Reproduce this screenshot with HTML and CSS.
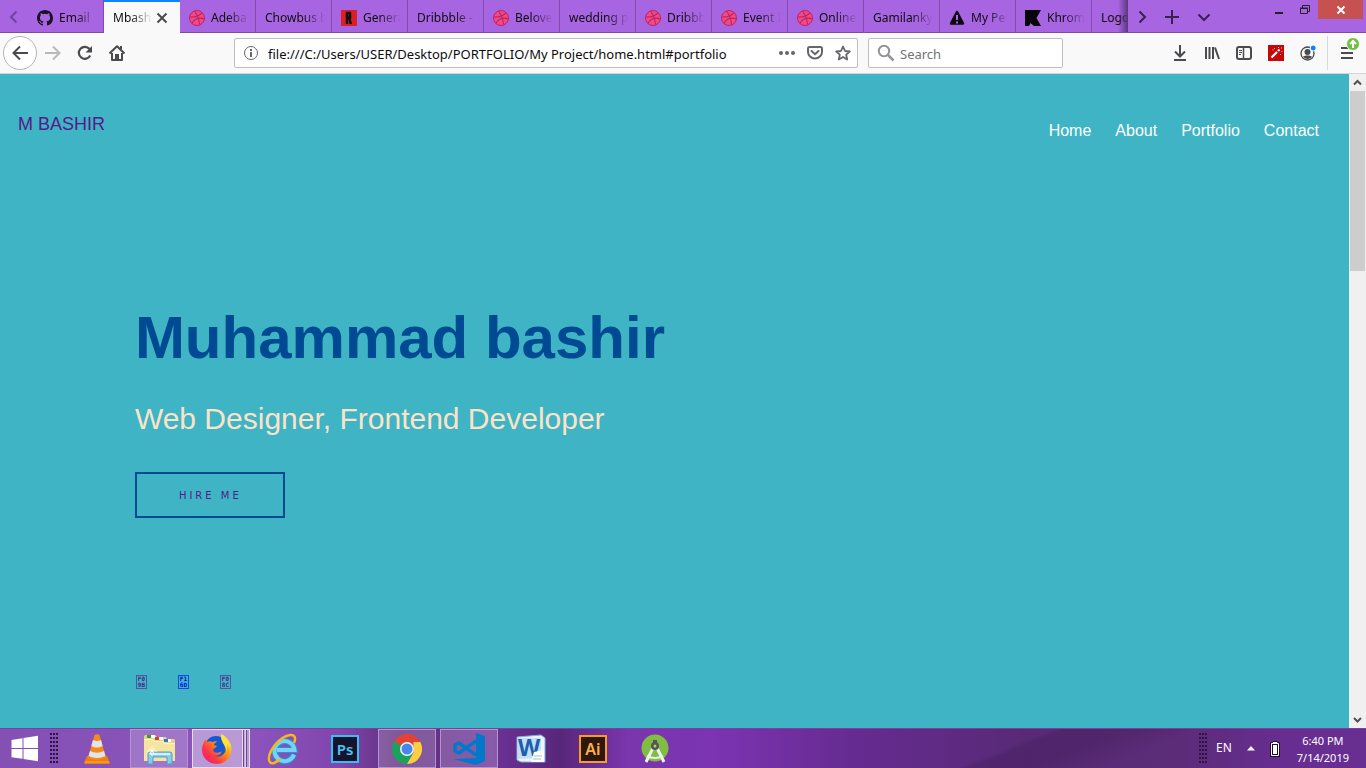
FILE: index.html
```html
<!DOCTYPE html>
<html lang="en">
<head>
<meta charset="utf-8">
<title>Mbashir</title>
<link rel="stylesheet" href="styles.css">
</head>
<body>
<svg class="defs" aria-hidden="true">
  <symbol id="dribbble" viewBox="0 0 16 16">
    <circle cx="8" cy="8" r="7.5" fill="#ea4c89" stroke="#c32361"/>
    <g fill="none" stroke="#c32361" stroke-width="1.2">
      <path d="M5.5 1c2.500 3.200 4.300 7.500 5.200 13.500"/>
      <path d="M.8 7C6 7.200 10.500 6 13 2.600"/>
      <path d="M3 13.400C5.200 9 10 7.300 15.300 8.800"/>
    </g>
  </symbol>
</svg>

<header class="browser">
  <div class="tabstrip">
    <button class="strip-btn faded" aria-label="Scroll tabs left"><svg width="16" height="16" viewBox="0 0 16 16"><path d="M10.500 2.500 5 8l5.500 5.500" fill="none" stroke="#221133" stroke-width="2"/></svg></button>
    <div class="tabs" role="tablist">
      <button class="tab" role="tab"><svg class="fav" viewBox="0 0 16 16"><path fill="#1b1224" d="M8 0C3.580 0 0 3.580 0 8c0 3.540 2.290 6.530 5.470 7.590.4.070.55-.17.55-.38v-1.490c-2.010.37-2.530-.49-2.690-.94-.09-.23-.48-.94-.82-1.130-.28-.15-.68-.52-.01-.53.63-.01 1.080.58 1.230.82.72 1.210 1.870.87 2.330.66.07-.52.28-.87.51-1.070-1.780-.2-3.640-.89-3.640-3.950 0-.87.31-1.590.82-2.150-.08-.2-.36-1.020.08-2.120 0 0 .67-.21 2.200.82a7.600 7.600 0 0 1 4 0c1.530-1.040 2.200-.82 2.200-.82.44 1.100.16 1.920.08 2.120.51.56.82 1.270.82 2.150 0 3.070-1.870 3.750-3.650 3.950.29.25.54.73.54 1.480v2.200c0 .21.15.46.55.38A8.010 8.010 0 0 0 16 8c0-4.420-3.580-8-8-8z"/></svg><span>Email</span></button>
      <button class="tab active" role="tab" aria-selected="true"><span>Mbashi</span><svg class="close" viewBox="0 0 12 12"><path d="M1.500 1.500l9 9m0-9l-9 9" stroke="#4a4a4f" stroke-width="2"/></svg></button>
      <button class="tab" role="tab"><svg class="fav"><use href="#dribbble"/></svg><span>Adeba</span></button>
      <button class="tab" role="tab"><span>Chowbus b</span></button>
      <button class="tab" role="tab"><svg class="fav" viewBox="0 0 16 16"><path fill="#dc1f26" d="M0 0h16v16H0z"/><path fill="none" stroke="#111" stroke-width="2.500" d="M6 14V3h3v4.500H6M8.300 8l1.500 6"/></svg><span>Genera</span></button>
      <button class="tab" role="tab"><span>Dribbble -</span></button>
      <button class="tab" role="tab"><svg class="fav"><use href="#dribbble"/></svg><span>Belove</span></button>
      <button class="tab" role="tab"><span>wedding p</span></button>
      <button class="tab" role="tab"><svg class="fav"><use href="#dribbble"/></svg><span>Dribbb</span></button>
      <button class="tab" role="tab"><svg class="fav"><use href="#dribbble"/></svg><span>Event I</span></button>
      <button class="tab" role="tab"><svg class="fav"><use href="#dribbble"/></svg><span>Online</span></button>
      <button class="tab" role="tab"><span>Gamilanky</span></button>
      <button class="tab" role="tab"><svg class="fav" viewBox="0 0 16 16"><path d="M8 2 14 13.500H2z" stroke="#0b0610" stroke-width="2.500" stroke-linejoin="round" fill="#0b0610"/><path d="M8 5v5M8 11.500v2" stroke="#a865e2" stroke-width="2"/></svg><span>My Pe</span></button>
      <button class="tab" role="tab"><svg class="fav" viewBox="0 0 16 16"><path d="M0 0h16l-4.500 8 4.500 8H9L5.500 13 4 16H0z" fill="#08040c"/></svg><span>Khrom</span></button>
      <button class="tab last" role="tab"><span>Logo</span></button>
    </div>
    <button class="strip-btn" aria-label="Scroll tabs right"><svg width="16" height="16" viewBox="0 0 16 16"><path d="m5.500 2.500 5.500 5.500-5.500 5.500" fill="none" stroke="#3a2050" stroke-width="2"/></svg></button>
    <button class="strip-btn wide" aria-label="New tab"><svg width="16" height="16" viewBox="0 0 16 16"><path d="M8 1v14M1 8h14" stroke="#3a2050" stroke-width="2"/></svg></button>
    <button class="strip-btn wide" aria-label="List all tabs"><svg width="16" height="16" viewBox="0 0 16 16"><path d="m2.500 5.500 5.500 5.500 5.500-5.500" fill="none" stroke="#3a2050" stroke-width="2"/></svg></button>
    <div class="window-controls">
      <button class="win" aria-label="Minimize"><svg width="12" height="12" viewBox="0 0 12 12"><path d="M2 9h8" stroke="#222" stroke-width="2"/></svg></button>
      <button class="win" aria-label="Restore"><svg width="12" height="12" viewBox="0 0 12 12"><path d="M1.500 4.500h7v5h-7zM3.500 4V1.500h7v6H9M1 4h8" fill="none" stroke="#222"/></svg></button>
      <button class="win win-close" aria-label="Close"><svg width="10" height="10" viewBox="0 0 10 10"><path d="m1.500 1.500 7 7m0-7-7 7" stroke="#fff" stroke-width="2"/></svg></button>
    </div>
  </div>

  <div class="toolbar">
    <button class="tool back" aria-label="Back"><svg width="16" height="16" viewBox="0 0 16 16"><path d="M16 8H1.500M8 1.500 1.500 8 8 14.500" fill="none" stroke="#4a4a4f" stroke-width="2"/></svg></button>
    <button class="tool" aria-label="Forward"><svg width="16" height="16" viewBox="0 0 16 16"><path d="M0 8h14.500M8 1.500 14.500 8 8 14.500" fill="none" stroke="#b9b9bb" stroke-width="2"/></svg></button>
    <button class="tool" aria-label="Reload"><svg width="16" height="16" viewBox="0 0 16 16"><path d="M13.200 10.500A6 6 0 1 1 12.500 4" fill="none" stroke="#4a4a4f" stroke-width="2.200"/><path d="M15 1v6.500H8.500z" fill="#4a4a4f"/></svg></button>
    <button class="tool" aria-label="Home"><svg width="16" height="16" viewBox="0 0 16 16"><path d="M.5 8.500 8 1.200l7.500 7.300M3 8v7h10V8" fill="none" stroke="#4a4a4f" stroke-width="2" stroke-linejoin="round"/><path d="M6 15V9h4v6z" fill="#4a4a4f"/><path d="M11 1h2v3h-2z" fill="#4a4a4f"/></svg></button>
    <div class="spring"></div>
    <div class="field url">
      <svg width="16" height="16" viewBox="0 0 16 16"><circle cx="8" cy="8" r="6.500" fill="none" stroke="#66666a"/><path d="M8 7v5M8 4v2" stroke="#66666a" stroke-width="2"/></svg>
      <input type="text" aria-label="Address" value="file:///C:/Users/USER/Desktop/PORTFOLIO/My Project/home.html#portfolio">
      <button class="mini" aria-label="Page actions"><svg width="16" height="16" viewBox="0 0 16 16" fill="#66666a"><circle cx="2" cy="8" r="2"/><circle cx="8" cy="8" r="2"/><circle cx="14" cy="8" r="2"/></svg></button>
      <button class="mini" aria-label="Save to Pocket"><svg width="16" height="16" viewBox="0 0 16 16" fill="none" stroke="#66666a" stroke-width="2"><path d="M2.500 2h11a1.500 1.500 0 0 1 1.500 1.500V7A7 6.500 0 0 1 1 7V3.500A1.500 1.500 0 0 1 2.500 2z"/><path d="M4.500 6 8 9.200 11.500 6" stroke-linecap="round"/></svg></button>
      <button class="mini" aria-label="Bookmark"><svg width="16" height="16" viewBox="0 0 16 16"><path d="m8 1.500 2 4.500 4.800.5-3.600 3.200 1 4.800L8 12l-4.200 2.500 1-4.800L1.200 6.500 6 6z" fill="none" stroke="#66666a" stroke-width="1.800" stroke-linejoin="round"/></svg></button>
    </div>
    <div class="field search">
      <svg width="18" height="18" viewBox="0 0 18 18"><circle cx="7" cy="7" r="5.200" fill="none" stroke="#939397" stroke-width="2"/><path d="m11 11 5.500 5.500" stroke="#939397" stroke-width="2.500"/></svg>
      <input type="search" aria-label="Search" placeholder="Search">
    </div>
    <div class="spring"></div>
    <button class="tool" aria-label="Downloads"><svg width="16" height="16" viewBox="0 0 16 16"><path d="M8 0v11M3 6.500 8 11.500l5-5M2 15h12" fill="none" stroke="#4a4a4f" stroke-width="2"/></svg></button>
    <button class="tool" aria-label="Library"><svg width="16" height="16" viewBox="0 0 16 16"><path d="M2 2v12M5.500 2v12M9 2v12M11 2.500l4 11.500" fill="none" stroke="#4a4a4f" stroke-width="2"/></svg></button>
    <button class="tool" aria-label="Sidebar"><svg width="16" height="16" viewBox="0 0 16 16" fill="none" stroke="#4a4a4f"><rect x="1" y="2" width="14" height="12" rx="2" stroke-width="2"/><path d="M7.500 2v12" stroke-width="1.500"/><path d="M3 5.500h3M3 7.500h3M3 9.500h2"/></svg></button>
    <button class="tool" aria-label="Highlighter"><svg width="16" height="16" viewBox="0 0 16 16"><path d="M0 0h16v16H0z" fill="#c70808"/><path d="m3.500 12.500 5.500-5.500" stroke="#fff" stroke-width="2.200"/><path d="m10 6 1.500-1.500" stroke="#fff" stroke-width="2.200"/><path d="M6 3.500h1M4.500 5h1M12 9.500h1M10 2.500h1M13.500 6.500h1M13 3h1" stroke="#ffb7b7"/></svg></button>
    <button class="tool" aria-label="Account"><svg width="16" height="16" viewBox="0 0 16 16"><circle cx="7.500" cy="8.500" r="6.500" fill="none" stroke="#4a4a4f" stroke-width="1.300"/><circle cx="7.500" cy="7" r="3" fill="#4a4a4f"/><path d="M3 12c1-2 8-2 9 0-2.500 2.500-6.500 2.500-9 0z" fill="#4a4a4f"/><circle cx="13.200" cy="3" r="3" fill="#0a84ff" stroke="#f9f9fa"/></svg></button>
    <button class="tool menu" aria-label="Menu"><svg width="20" height="24" viewBox="0 0 20 24"><path d="M1 10h12M1 15h12M1 20h12" stroke="#4a4a4f" stroke-width="2"/><circle cx="13" cy="6" r="6.500" fill="#74bd43" stroke="#f9f9fa"/><path d="M13 10V3.500M10 6l3-3 3 3" fill="none" stroke="#fff" stroke-width="2"/></svg></button>
  </div>
</header>

<div class="viewport">
  <main class="page">
    <div class="page-head">
      <a class="logo" href="#home">M BASHIR</a>
      <nav class="page-nav">
        <a href="#home">Home</a>
        <a href="#about">About</a>
        <a href="#portfolio">Portfolio</a>
        <a href="#contact">Contact</a>
      </nav>
    </div>
    <section class="hero">
      <h1>Muhammad bashir</h1>
      <p>Web Designer, Frontend Developer</p>
      <a class="hire" href="#contact">HIRE ME</a>
      <div class="social">
        <a href="#github" aria-label="GitHub">F0<br>9B</a>
        <a class="unvisited" href="#instagram" aria-label="Instagram">F1<br>6D</a>
        <a href="#linkedin" aria-label="LinkedIn">F0<br>8C</a>
      </div>
    </section>
  </main>
  <div class="scrollbar" aria-hidden="true">
    <svg class="arrow" viewBox="0 0 17 17"><path d="M5 10.500 8.500 7l3.500 3.500" fill="none" stroke="#505050" stroke-width="2"/></svg>
    <div class="track"><div class="thumb"></div></div>
    <svg class="arrow" viewBox="0 0 17 17"><path d="M5 7l3.500 3.500L12 7" fill="none" stroke="#505050" stroke-width="2"/></svg>
  </div>
</div>

<footer class="taskbar">
  <button class="start" aria-label="Start"><svg width="28" height="28" viewBox="0 0 28 28" fill="#fff"><path d="M.5 5 11.500 3.200V13H.5zM12.500 3 27 .8V13H12.500zM.5 14h11v9.800L.5 22.200zM12.500 14H27v12.200L12.500 24z"/></svg></button>
  <div class="grip"></div>
  <div class="apps">
    <button class="app" aria-label="VLC"><svg width="32" height="32" viewBox="0 0 32 32"><path d="M6 23h20l3 7q0 1-1 1H4q-1 0-1-1z" fill="#ef7d0c"/><path d="M4 29h24" stroke="#ffb04a" stroke-width="1"/><path d="M13.500 2q2.500-1.500 5 0L25 25q-9 4-18 0z" fill="#f58a1c"/><path d="M12 7q4 2 8 0l1.700 6q-5.700 3-11.400 0zM9 18q7 3.500 14 0l1.500 5q-8.500 4-17 0z" fill="#e4e4e8"/></svg></button>
    <button class="app open" aria-label="File Explorer"><svg width="34" height="32" viewBox="0 0 34 32"><path d="M2 4q0-2 2-2h9l2 2h9l1 2h7q1 0 1 2v16H2z" fill="#e8d283"/><path d="M5 2h8v3H5z" fill="#fff"/><path d="M5 2h4v3H5z" fill="#2aa336"/><path d="M13 4h8v3h-8z" fill="#fff"/><path d="M13 4h4v3h-4z" fill="#db4125"/><path d="M22 6h7v3h-7z" fill="#fff"/><path d="M22 6h4v3h-4z" fill="#2c78d2"/><path d="M2 6h9l2 2h8l2 2h10v18H2z" fill="#f5e5a0"/><path d="M2 6.500h9l2 2h8l2 2h10" fill="none" stroke="#fff6cc"/><path d="M6 31V21q0-2 2-2h20q2 0 2 2v10h-5v-7H11v7z" fill="#8ccbe9" stroke="#4d9fc9"/><path d="M8 21h20" stroke="#d4f1fd" stroke-width="2"/><path d="M10 13v10M5 18h10M7 15l6 6M13 15l-6 6" stroke="#fff" stroke-width=".8"/></svg></button>
    <button class="app stacked" aria-label="Firefox"><svg width="32" height="32" viewBox="0 0 32 32"><defs><linearGradient id="fx" x1="1" y1="0" x2="0" y2="1"><stop offset=".1" stop-color="#fff44f"/><stop offset=".4" stop-color="#ff980e"/><stop offset=".7" stop-color="#ff3647"/><stop offset="1" stop-color="#e31587"/></linearGradient></defs><circle cx="15" cy="14" r="11" fill="#1558cf"/><path d="M20 1c6 3 11 9 10.500 16C30 25 23.500 31 16 31 8 31 1 25 1 17c0-5 2-9 4-11l1 3c2-1 4-1 5 0l5-1c-1 2-3 2-3 4l3 1c-1 2-3 2-4 4 1 4 7 3 9 1-2 6-8 5-9 4 5 4 13 0 13-7 0-6-5-8-5-15z" fill="url(#fx)"/><path d="M20 1c7 4 9 9 9 14l-3-4c0 3 0 5-1 7 0-6-6-9-5-17z" fill="#ffe23a"/></svg></button>
    <button class="app" aria-label="Internet Explorer"><svg width="32" height="32" viewBox="0 0 32 32"><path d="M27 21.500A10 10 0 1 1 27.500 17H10" fill="none" stroke="#2f8fd6" stroke-width="6"/><path d="M27 21.500A10 10 0 1 1 27.500 17H10" fill="none" stroke="#74d3f7" stroke-width="4"/><path d="M27 10C32-2 18 0 8 12 0 22 0 32 7 30q3-1 6-4" fill="none" stroke="#f4b81d" stroke-width="2.500"/></svg></button>
    <button class="app" aria-label="Photoshop"><svg width="28" height="28" viewBox="0 0 28 28"><path d="M1 1h26v26H1z" fill="#14142c" stroke="#35bdf5" stroke-width="2"/><text x="14" y="20" text-anchor="middle" class="badge-text ps">Ps</text></svg></button>
    <button class="app open" aria-label="Chrome"><svg width="30" height="30" viewBox="0 0 30 30"><path d="M15 15 2 7.500A15 15 0 0 1 28 7.500z" fill="#e14335"/><path d="M2 7.500A15 15 0 0 0 15 30l6.500-11.300L15 15z" fill="#1da15f"/><path d="M28 7.500A15 15 0 0 1 15 30l6.500-11.200V7.500z" fill="#ffcd42"/><path d="M15 8h13.200A15 15 0 0 0 28 7.500L15 0z" fill="#e14335"/><circle cx="15" cy="15" r="7" fill="#f4f4f4"/><circle cx="15" cy="15" r="5.500" fill="#4587ee"/></svg></button>
    <button class="app open" aria-label="Visual Studio Code"><svg width="34" height="34" viewBox="0 0 34 34"><path d="M24 1 33 4v25l-9 4L1 27l23-1z" fill="#0179cb"/><path d="M24 9 7 21 3 19V13l4-2 17 12" fill="none" stroke="#0179cb" stroke-width="3.500"/></svg></button>
    <button class="app" aria-label="Word"><svg width="30" height="30" viewBox="0 0 30 30"><path d="M1 3 25 1l4 3v24H5l-4-2z" fill="#edf5fc" stroke="#7eaed9"/><path d="M2 4h23v20l-23 1z" fill="#c5def3"/><text x="13" y="22" text-anchor="middle" class="badge-text word">W</text><path d="m18 18 10-2v12H15z" fill="#fff"/><path d="M18 22h8M17 25h8" stroke="#9fc1df"/></svg></button>
    <button class="app" aria-label="Illustrator"><svg width="28" height="28" viewBox="0 0 28 28"><path d="M1 1h26v26H1z" fill="#2e180c" stroke="#fa9c1c" stroke-width="2"/><text x="14" y="20" text-anchor="middle" class="badge-text ai">Ai</text></svg></button>
    <button class="app" aria-label="Android Studio"><svg width="28" height="30" viewBox="0 0 28 30"><circle cx="14" cy="14" r="13.500" fill="#7fbd43"/><path d="M12 6h4v6h-4z" fill="#555"/><path d="M12 14 5 28M16 14l7 14" stroke="#eef3ea" stroke-width="3"/><path d="M6 22q8 4 16 0" fill="none" stroke="#eef3ea" stroke-width="2"/><circle cx="14" cy="12" r="4" fill="#555"/><circle cx="14" cy="12" r="1.500" fill="#a9d080"/></svg></button>
  </div>
  <div class="grip"></div>
  <div class="tray">
    <span class="lang">EN</span>
    <button class="tray-btn" aria-label="Show hidden icons"><svg width="8" height="5" viewBox="0 0 8 5"><path d="m4 0 4 4.500H0z" fill="#fff"/></svg></button>
    <svg width="10" height="16" viewBox="0 0 10 16"><path d="M0 1.500h3V0h4v1.500h3V16H0z" fill="#1f0d2c"/><path d="M1.500 2.500h7v12h-7zM3 1.500h4" fill="none" stroke="#fff"/><path d="M3 4h4v9H3z" fill="#fff"/></svg>
    <time class="clock" datetime="2019-07-14T18:40"><span>6:40 PM</span><span>7/14/2019</span></time>
  </div>
</footer>
</body>
</html>
```
FILE: styles.css
```css
* { box-sizing: border-box; }

body {
  margin: 0;
  height: 100vh;
  display: flex;
  flex-direction: column;
  overflow: hidden;
  font-family: "Noto Sans", "Open Sans", sans-serif;
  font-size: 12px;
  color: #0c0c0d;
}

button {
  border: 0;
  padding: 0;
  background: none;
  font: inherit;
  color: inherit;
  display: flex;
  align-items: center;
  justify-content: center;
  flex: none;
}

svg { display: block; flex: none; }
.defs { position: absolute; width: 0; height: 0; }
a { text-decoration: none; }

/* Tab strip */
.browser { flex: none; }

.tabstrip {
  display: flex;
  height: 33px;
  background: #a865e2;
  box-shadow: inset 0 -1px #7b4aa6;
}

.strip-btn { width: 28px; }
.strip-btn.wide { width: 32px; }
.strip-btn.faded { opacity: .4; }

.tabs {
  display: flex;
  flex: 1;
  min-width: 0;
  overflow: hidden;
  position: relative;
}

.tabs::after {
  content: "";
  position: absolute;
  top: 0;
  right: 0;
  bottom: 1px;
  width: 10px;
  background: linear-gradient(90deg, transparent, #5b377b);
}

.tab {
  width: 76px;
  padding: 2px 4px 0 9px;
  gap: 6px;
  justify-content: flex-start;
  border-right: 1px solid #7f4cab;
}

.tab span {
  flex: 1;
  min-width: 0;
  overflow: hidden;
  white-space: nowrap;
  text-align: left;
  mask-image: linear-gradient(90deg, #000 calc(100% - 24px), transparent calc(100% - 2px));
}

.tab.last span { mask-image: none; }

.tab.active {
  gap: 2px;
  padding-right: 12px;
  background: #f9f9fa;
  border-right: 0;
  box-shadow: inset 0 2px #0a84ff;
}

.fav { width: 16px; height: 16px; }
.close { width: 12px; height: 12px; }

.window-controls { display: flex; align-items: flex-start; margin-left: 46px; padding-right: 3px; }
.win { width: 26px; height: 19px; }
.win-close { width: 45px; background: #c75050; }

/* Navigation toolbar */
.toolbar {
  display: flex;
  align-items: center;
  height: 41px;
  padding: 0 3px;
  background: #f9f9fa;
  border-bottom: 1px solid #d5d5d8;
}

.tool { width: 32px; height: 32px; }

.back {
  width: 34px;
  height: 34px;
  border: 1px solid #b5b5b8;
  border-radius: 50%;
  background: #fff;
}

.spring { flex: 1 1 0; max-width: 101px; }

.field {
  display: flex;
  align-items: center;
  min-width: 0;
  height: 30px;
  background: #fff;
  border: 1px solid #bebec1;
  border-radius: 2px;
}

.field input {
  flex: 1;
  min-width: 0;
  border: 0;
  outline: 0;
  padding: 2px 0 0;
  background: none;
  font-family: inherit;
  font-size: 13px;
  color: #0c0c0d;
}

.field input::placeholder { color: #737377; opacity: 1; }
.url { flex: 1 1 0; padding: 0 0 0 8px; gap: 9px; }
.mini { width: 28px; height: 28px; margin-left: -9px; }
.search { flex: 0 1 195px; margin-left: 10px; padding: 0 8px; gap: 5px; }

.menu {
  width: 36px;
  height: 34px;
  margin-left: 3px;
  padding: 0 0 6px 8px;
  border-left: 1px solid #d9d9dc;
}

/* Portfolio page */
.viewport { display: flex; flex: 1; min-height: 0; }

.page {
  flex: 1;
  background: #3eb4c5;
  font-family: "Liberation Sans", Arial, sans-serif;
  overflow: hidden;
}

.page-head {
  display: flex;
  justify-content: space-between;
  padding: 40px 30px 0 18px;
  line-height: 20px;
}

.page a { color: #551a8b; }
.logo { font-size: 18px; }
.page-nav { display: flex; gap: 24px; padding-top: 7px; font-size: 16px; }
.page .page-nav a { color: #fff; }

.hero {
  display: flex;
  flex-direction: column;
  align-items: flex-start;
  padding: 167px 10% 0;
}

.hero h1 {
  margin: 0;
  font-size: 60px;
  line-height: 60px;
  color: #004a94;
}

.hero p {
  margin: 31px 0 0;
  font-size: 30px;
  line-height: 40px;
  color: #fae3c8;
}

.hire {
  margin-top: 33px;
  padding: 15px 41px 13px 42px;
  border: 2px solid #004a94;
  font: 10px/14px "DejaVu Sans", Verdana, sans-serif;
  letter-spacing: 3px;
}

.social { display: flex; gap: 31px; margin-top: 157px; padding-left: 1px; }

.social a {
  width: 11px;
  height: 14px;
  border: 1px solid rgba(85, 26, 139, .6);
  text-align: center;
  font: bold 6px/6px "DejaVu Sans Mono", monospace;
}

.social .unvisited { color: #0000ee; border-color: rgba(0, 0, 238, .6); }

.scrollbar {
  display: flex;
  flex-direction: column;
  width: 17px;
  background: #f0f0f0;
}

.arrow { width: 17px; height: 17px; }
.track { flex: 1; padding: 0 1px; }
.thumb { height: 29%; background: #cdcdcd; }

/* Windows taskbar */
.taskbar {
  display: flex;
  align-items: stretch;
  height: 40px;
  flex: none;
  color: #fff;
  border-top: 1px solid #73449b;
  background:
    linear-gradient(158deg, transparent 72%, rgba(60, 25, 80, .3) 73%, rgba(60, 25, 80, .3) 77%, transparent 82%),
    linear-gradient(90deg, #8450b4 0, #8c55bd 18%, #8145ac 25%, #61307f 29%, #6c3296 36%, #572779 41%, #7a36ad 46%, #7c34b2 52%, #652b90 63%, #582a76 75%, #5b2c78 86%, #672d90 94%, #682e92 100%);
}

.start { width: 50px; }

.grip {
  width: 9px;
  margin: 4px 0;
  background: radial-gradient(circle at 1px 1px, #2e1640 1px, transparent 1px) 0 0 / 3px 4px;
}

.apps { display: flex; gap: 4px; margin-left: 9px; flex: 1; min-width: 0; }
.app { width: 58px; }

.open {
  border: 1px solid #b593d0;
  background: rgba(255, 255, 255, .2);
}

.stacked {
  padding-right: 8px;
  border: 1px solid #e8daf3;
  background:
    linear-gradient(90deg, #e8daf3 1px, #6f4597 1px, #6f4597 2px, #b79dcf 2px, #e8daf3 4px, #6f4597 4px, #6f4597 5px, #b79dcf 5px) right / 7px 100% no-repeat,
    rgba(255, 255, 255, .4);
}

.badge-text { font-family: "Noto Sans", "Open Sans", sans-serif; font-weight: 600; }
.ps { font-size: 15px; fill: #4bc5f7; }
.ai { font-size: 16px; fill: #fcae4a; }
.word { font-size: 23px; font-weight: 700; fill: #1b5fae; }

.tray { display: flex; align-items: center; padding: 0 17px 0 8px; }
.lang { padding-bottom: 3px; }
.tray-btn { width: 38px; height: 32px; }

.clock {
  display: flex;
  flex-direction: column;
  align-items: center;
  margin-left: 17px;
  font-size: 11px;
  line-height: 17px;
}
```
